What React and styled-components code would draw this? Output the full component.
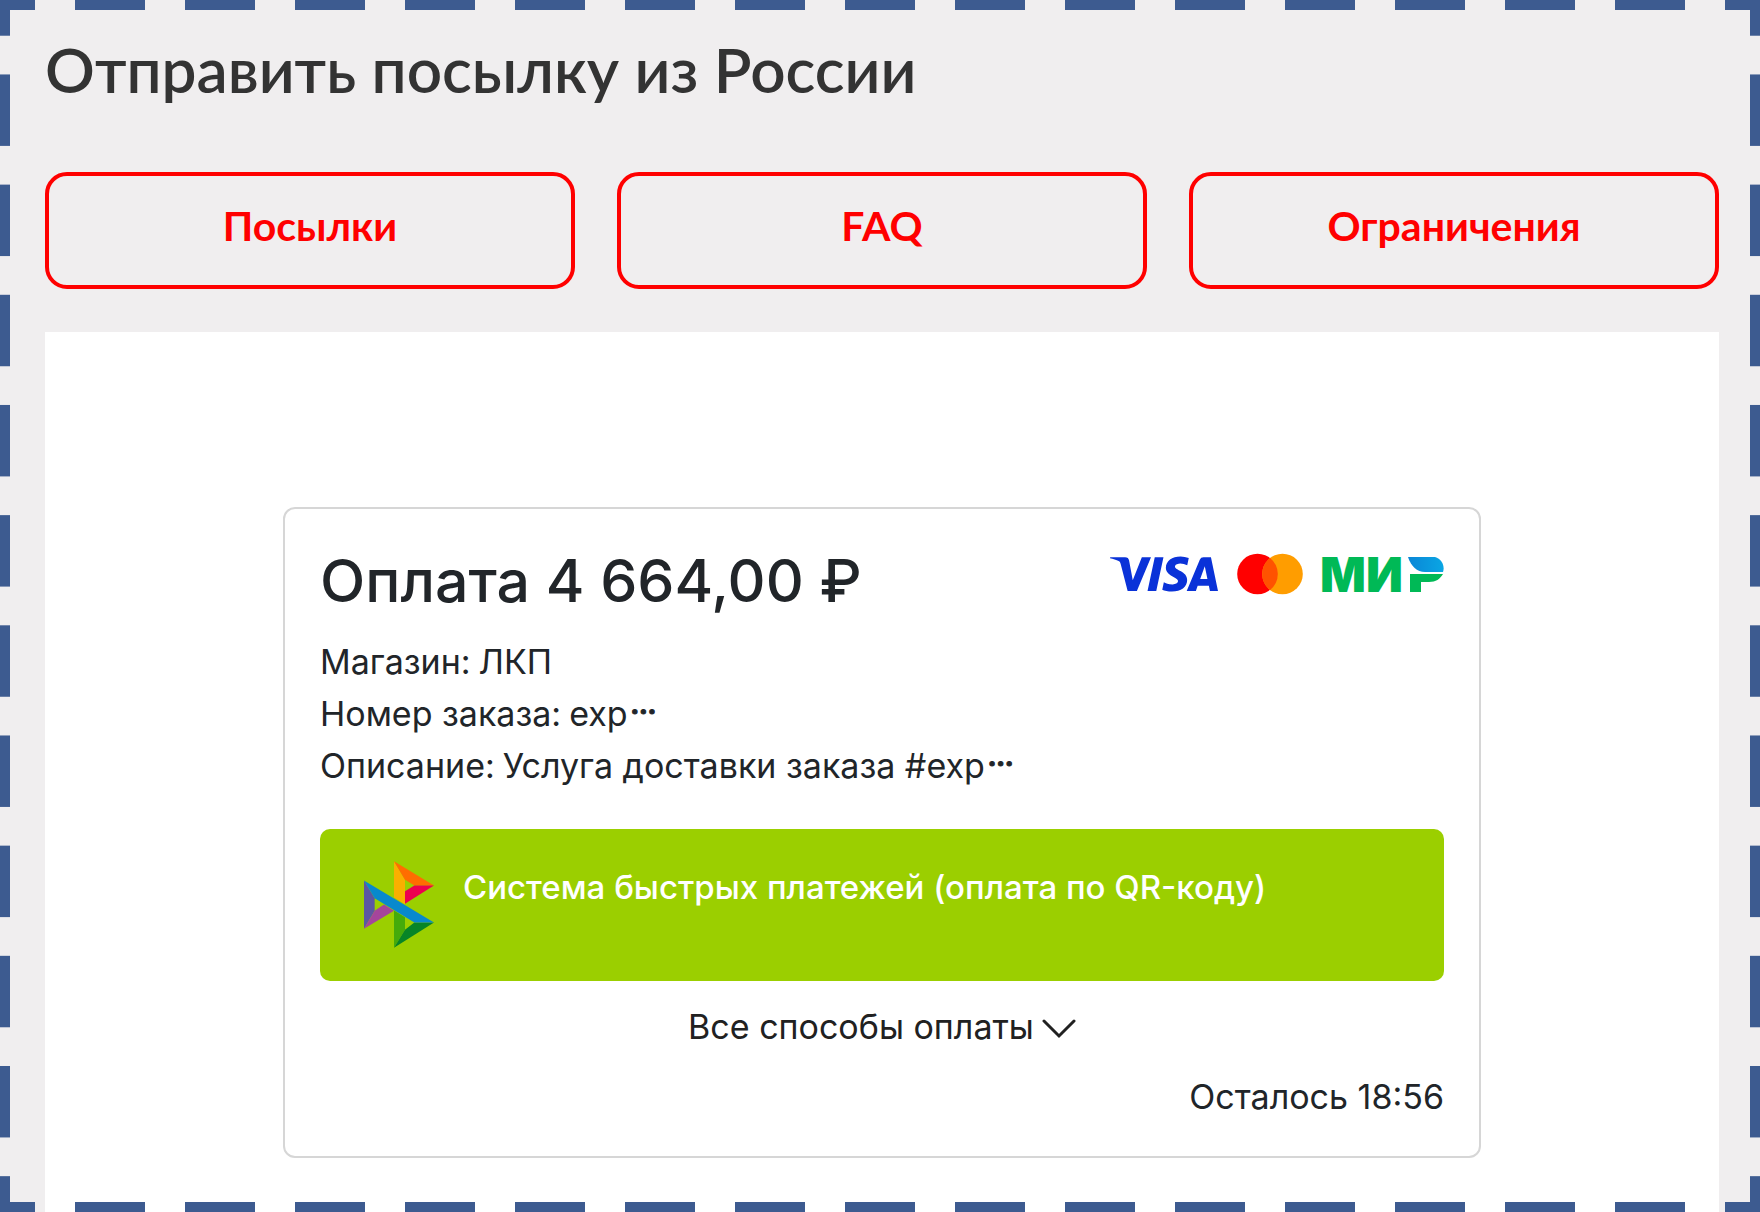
import React from "react";
import styled, { createGlobalStyle } from "styled-components";
import { SiVisa } from "react-icons/si";

const GlobalStyle = createGlobalStyle`
  *, *::before, *::after { box-sizing: border-box; }
  html, body { margin: 0; background: #f0eeef; }
  h1, h2, p, dl, dd { margin: 0; }
  body { overflow-x: hidden; }
`;

const uiFont = `Inter, "Liberation Sans", sans-serif`;
const headFont = `Lato, "Open Sans", sans-serif`;

const dash = (dir) =>
  `linear-gradient(${dir}, #3d5b90 0 32%, transparent 32% 68%, #3d5b90 68% 100%)`;

const DashedFrame = styled.div`
  position: fixed;
  inset: 0;
  pointer-events: none;
  background-image: ${dash("90deg")}, ${dash("90deg")}, ${dash("180deg")}, ${dash("180deg")};
  background-size: 110px 10px, 110px 10px, 10px 110px, 10px 110px;
  background-position: 0 0, 0 100%, 0 0, 100% 0;
  background-repeat: round no-repeat, round no-repeat, no-repeat round, no-repeat round;
`;

const Page = styled.main`
  display: flex;
  flex-direction: column;
  min-height: 100vh;
  padding: 34px 41px 0 45px;
  font-family: ${uiFont};
`;

const Heading = styled.h1`
  font: 600 62px/70px ${headFont};
  color: #333;
`;

const Tabs = styled.nav`
  display: grid;
  grid-template-columns: repeat(3, 1fr);
  gap: 42px;
  margin: 68px 0 43px;
`;

const Tab = styled.a`
  display: flex;
  justify-content: center;
  padding: 24px 16px 33px;
  border: 4px solid #f00;
  border-radius: 22px;
  color: #f00;
  font: 700 41px/52px ${headFont};
  text-decoration: none;
`;

const Panel = styled.section`
  flex: 1;
  padding: 175px 32px 54px;
  background: #fff;
`;

const Card = styled.article`
  display: flex;
  flex-direction: column;
  max-width: 1198px;
  margin: 0 auto;
  padding: 35px 35px 33px;
  border: 2px solid #d6d6d6;
  border-radius: 12px;
  color: #212529;
  font-size: 34px;
  line-height: 52px;
`;

const CardHeader = styled.header`
  display: flex;
  justify-content: space-between;
  align-items: flex-start;
`;

const Title = styled.h2`
  font-size: 59px;
  font-weight: 500;
  line-height: 74px;
`;

const Brands = styled.div`
  display: flex;
  align-items: center;
  gap: 16px;
  height: 60px;
`;

const VisaBox = styled.span`
  display: flex;
  align-items: center;
  height: 42px;
  overflow: hidden;
  color: #0a32d8;
`;

const Details = styled.dl`
  margin: 18px 0 37px;
`;

const Row = styled.div`
  display: flex;
  gap: 8px;
`;

const Masked = styled.span`
  margin-left: 3px;
  font-size: 23px;
  font-weight: 900;
  vertical-align: 12px;
  line-height: 1px;
  -webkit-text-stroke: 1px currentColor;
`;

const FastPay = styled.button`
  display: flex;
  align-items: flex-start;
  gap: 29px;
  min-height: 152px;
  padding: 32px 44px;
  border: 0;
  border-radius: 10px;
  background: #9bcf00;
  color: #fff;
  font: 500 33px/52px ${uiFont};
  text-align: left;
  cursor: pointer;
`;

const AllMethods = styled.button`
  display: flex;
  align-items: center;
  align-self: center;
  gap: 8px;
  margin: 20px 0 18px;
  padding: 0;
  border: 0;
  background: none;
  color: #212121;
  font: 400 34px/52px ${uiFont};
  cursor: pointer;
`;

const TimeLeft = styled.p`
  text-align: right;
`;

const MirWord = styled.text`
  font: 900 48px ${uiFont};
  fill: #00b956;
`;

const Mastercard = () => (
  <svg width="69" height="42" viewBox="-3 0 69 42" role="img" aria-label="Mastercard">
    <circle cx="20.5" cy="21" r="20.3" fill="#ff0000" />
    <circle cx="45.5" cy="21" r="20.3" fill="#ff9d00" />
    <path d="M33 5a20.3 20.3 0 0 1 0 32 20.3 20.3 0 0 1 0-32z" fill="#ff5200" />
  </svg>
);

const Mir = () => (
  <svg width="125" height="60" viewBox="-3 -12 125 60" role="img" aria-label="МИР">
    <defs>
      <linearGradient id="wing" x1="0" x2="1">
        <stop offset="0" stopColor="#0a86d6" />
        <stop offset="1" stopColor="#0aa6e4" />
      </linearGradient>
    </defs>
    <MirWord x="-2" y="36">М</MirWord>
    <MirWord x="44" y="36">И</MirWord>
    <path d="M86 1h27c7 2 10 9 8 15H103C95 16 89 10 86 1z" fill="url(#wing)" />
    <path d="M88 18h33c-3 5-7 8-14 8h-8v10H88z" fill="#00b956" />
  </svg>
);

const SbpMark = () => (
  <svg width="70" height="87" viewBox="42 32 210 260" aria-hidden="true">
    <path d="M42 90l32 53v38l-32 54z" fill="#5b57a2" />
    <path d="M42 235l32-54 28-19 30 19z" fill="#a5459b" />
    <path d="M132 32l33 56v73l-33-20z" fill="#faaf00" />
    <path d="M132 32l120 73h-59l-28-17z" fill="#ff6d00" />
    <path d="M193 105h59l-87 55v-38z" fill="#ed0050" />
    <path d="M132 180l33 20v38l-33 54z" fill="#45ab0b" />
    <path d="M132 292l120-76h-59l-28 22z" fill="#078527" />
    <path d="M42 90l210 126h-59L74 143z" fill="#0889cd" />
  </svg>
);

const Chevron = () => (
  <svg width="34" height="24" viewBox="0 0 34 24" fill="none" aria-hidden="true">
    <path d="M2 6l15 15L32 6" stroke="currentColor" strokeWidth="3" strokeLinecap="round" />
  </svg>
);

const tabs = ["Посылки", "FAQ", "Ограничения"];

const details = [
  { label: "Магазин:", value: "ЛКП" },
  { label: "Номер заказа:", value: "exp", masked: true },
  { label: "Описание:", value: "Услуга доставки заказа #exp", masked: true },
];

export default function App() {
  return (
    <>
      <GlobalStyle />
      <Page>
        <Heading>Отправить посылку из России</Heading>
        <Tabs>
          {tabs.map((t) => (
            <Tab key={t} href="#">{t}</Tab>
          ))}
        </Tabs>
        <Panel>
          <Card>
            <CardHeader>
              <Title>Оплата 4 664,00 ₽</Title>
              <Brands>
                <VisaBox><SiVisa size={108} title="Visa" /></VisaBox>
                <Mastercard />
                <Mir />
              </Brands>
            </CardHeader>
            <Details>
              {details.map((d) => (
                <Row key={d.label}>
                  <dt>{d.label}</dt>
                  <dd>
                    {d.value}
                    {d.masked && <Masked>…</Masked>}
                  </dd>
                </Row>
              ))}
            </Details>
            <FastPay type="button">
              <SbpMark />
              Система быстрых платежей (оплата по QR-коду)
            </FastPay>
            <AllMethods type="button">
              Все способы оплаты
              <Chevron />
            </AllMethods>
            <TimeLeft>Осталось 18:56</TimeLeft>
          </Card>
        </Panel>
      </Page>
      <DashedFrame />
    </>
  );
}
